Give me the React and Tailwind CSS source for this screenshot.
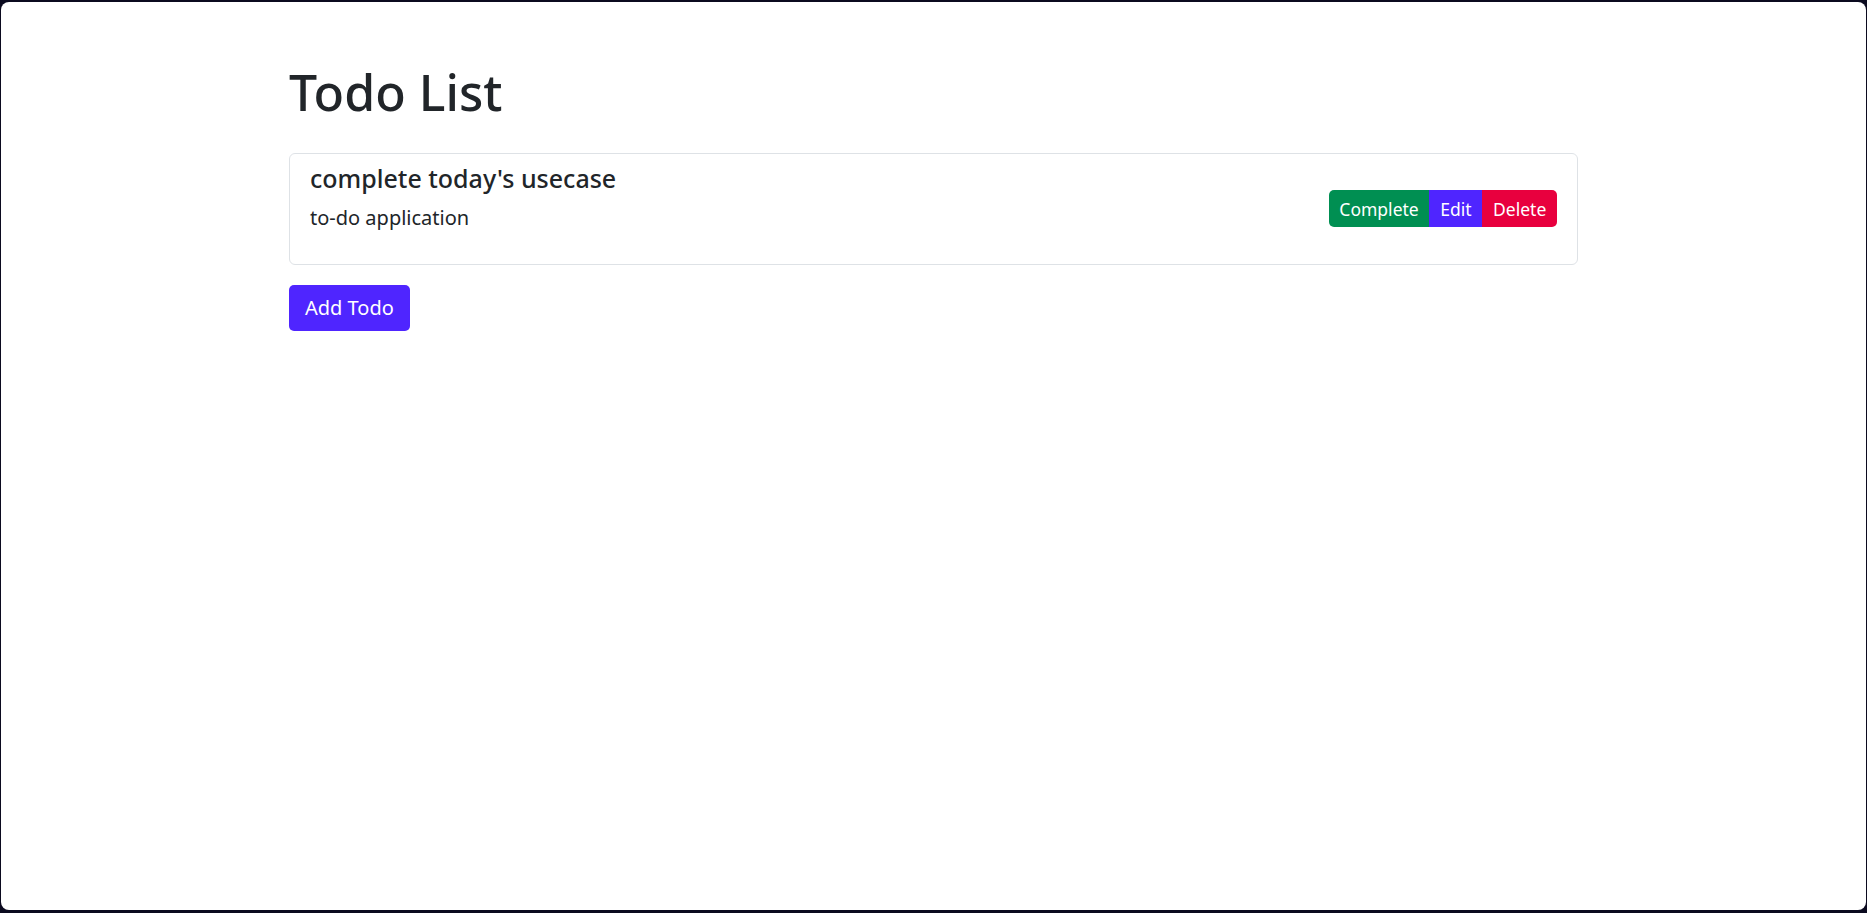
import React, { useState } from 'react';

const font = { fontFamily: '"Noto Sans", "Open Sans", sans-serif' };

const TodoItem = ({ todo, onComplete, onEdit, onDelete }) => (
    <div className="flex items-center justify-between border border-[#dee2e6] rounded-[6px] px-[20px] pt-[9px] pb-[10px]">
        <div>
            <h5 className="text-[25px] leading-[30px] font-medium text-[#212529] mb-[10px]">{todo.title}</h5>
            <p className="text-[20px] leading-[30px] text-[#212529] mb-[21px]">{todo.description}</p>
        </div>
        <div className="flex text-[17.5px] leading-[26px] text-white">
            <button onClick={onComplete} className="bg-[#008f52] rounded-l-[5px] px-[10.75px] py-[5.5px]">Complete</button>
            <button onClick={onEdit} className="bg-[#4f25ff] px-[10.75px] py-[5.5px]">Edit</button>
            <button onClick={onDelete} className="bg-[#e8003e] rounded-r-[5px] px-[10.75px] py-[5.5px]">Delete</button>
        </div>
    </div>
);

const App = () => {
    const [todos, setTodos] = useState([
        { id: 1, title: "complete today's usecase", description: 'to-do application' },
    ]);

    return (
        <div className="w-full h-screen bg-[#0b0a1f] pt-[2px] pl-[1px] pr-[1px] pb-[3px]" style={font}>
            <div className="w-full h-full bg-white rounded-[8px] overflow-hidden">
                <div className="w-[1289px] mx-auto pt-[60px]">
                    {/* Header */}
                    <h1 className="text-[50px] leading-[60px] font-medium text-[#212529] mb-[31px]">Todo List</h1>

                    <div className="flex flex-col gap-2">
                        {todos.map(todo => (
                            <TodoItem
                                key={todo.id}
                                todo={todo}
                                onDelete={() => setTodos(todos.filter(t => t.id !== todo.id))}
                            />
                        ))}
                    </div>

                    <button className="mt-[20px] bg-[#4f25ff] text-white rounded-[5px] text-[20px] leading-[30px] px-[16px] py-[8px]">
                        Add Todo
                    </button>
                </div>
            </div>
        </div>
    );
};

export default App;
